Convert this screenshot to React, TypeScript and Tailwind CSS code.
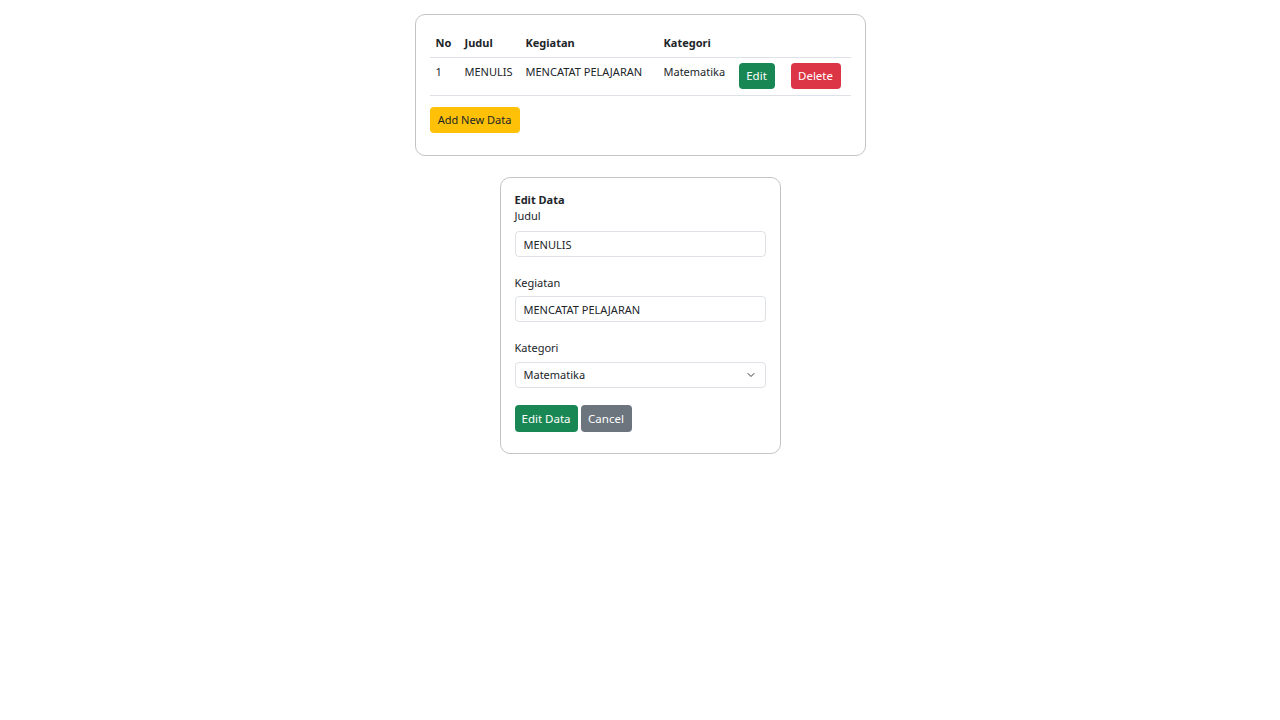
import React, { useState } from 'react';

const rows = [{ no: 1, judul: 'MENULIS', kegiatan: 'MENCATAT PELAJARAN', kategori: 'Matematika' }];

export default function App() {
  const [judul, setJudul] = useState('MENULIS');
  const [kegiatan, setKegiatan] = useState('MENCATAT PELAJARAN');
  const [kategori, setKategori] = useState('Matematika');

  return (
    <div className="min-h-screen bg-white flex flex-col items-center pt-[14px] text-[11px] leading-[18px] text-[#212529]" style={{ fontFamily: '"Noto Sans", "Open Sans", sans-serif' }}>
      {/* Table card */}
      <div className="w-[451px] border border-[#c4c4c4] rounded-[10px] px-[14px] pt-[14px] pb-[22px]">
        <table className="w-[421px] table-fixed border-collapse">
          <colgroup>
            <col className="w-[29px]" />
            <col className="w-[61px]" />
            <col className="w-[138px]" />
            <col className="w-[75px]" />
            <col className="w-[52px]" />
            <col className="w-[66px]" />
          </colgroup>
          <thead>
            <tr className="border-b border-[#dee2e6]">
              <th className="text-left font-bold px-[6px] py-[5px]">No</th>
              <th className="text-left font-bold px-[6px] py-[5px]">Judul</th>
              <th className="text-left font-bold px-[6px] py-[5px]">Kegiatan</th>
              <th className="text-left font-bold px-[6px] py-[5px]">Kategori</th>
              <th className="px-[6px] py-[5px]"></th>
              <th className="px-[6px] py-[5px]"></th>
            </tr>
          </thead>
          <tbody>
            {rows.map((r) => (
              <tr key={r.no} className="border-b border-[#dee2e6] align-top">
                <td className="px-[6px] pt-[5px] pb-[6px]">{r.no}</td>
                <td className="px-[6px] pt-[5px] pb-[6px] whitespace-nowrap">{r.judul}</td>
                <td className="px-[6px] pt-[5px] pb-[6px] whitespace-nowrap">{r.kegiatan}</td>
                <td className="px-[6px] pt-[5px] pb-[6px] whitespace-nowrap">{r.kategori}</td>
                <td className="px-[6px] pt-[5px] pb-[6px]">
                  <button className="h-[26px] w-[36px] rounded-[4px] bg-[#198754] text-white text-[11.5px]">Edit</button>
                </td>
                <td className="px-[6px] pt-[5px] pb-[6px]">
                  <button className="h-[26px] w-[50px] rounded-[4px] bg-[#dc3545] text-white text-[11.5px]">Delete</button>
                </td>
              </tr>
            ))}
          </tbody>
        </table>
        <button className="mt-[11px] h-[26px] w-[90px] rounded-[4px] bg-[#ffc107] text-[#212529]">Add New Data</button>
      </div>

      {/* Edit form card */}
      <div className="mt-[21px] w-[281px] border border-[#c4c4c4] rounded-[10px] px-[14px] pt-[14px] pb-[21px]">
        <div className="font-bold leading-[16px]">Edit Data</div>
        <div className="leading-[16px]">Judul</div>
        <input
          value={judul}
          onChange={(e) => setJudul(e.target.value)}
          className="mt-[7px] block w-full h-[26px] px-[8px] border border-[#dee2e6] rounded-[4px] outline-none"
        />
        <div className="mt-[17px]">Kegiatan</div>
        <input
          value={kegiatan}
          onChange={(e) => setKegiatan(e.target.value)}
          className="mt-[4px] block w-full h-[26px] px-[8px] border border-[#dee2e6] rounded-[4px] outline-none"
        />
        <div className="mt-[17px]">Kategori</div>
        <div className="relative mt-[5px]">
          <select
            value={kategori}
            onChange={(e) => setKategori(e.target.value)}
            className="appearance-none block w-full h-[26px] px-[8px] border border-[#dee2e6] rounded-[4px] outline-none bg-white"
          >
            <option>Matematika</option>
            <option>Bahasa</option>
            <option>IPA</option>
          </select>
          <svg className="absolute right-[10px] top-[9px] pointer-events-none" width="10" height="8" viewBox="0 0 16 16">
            <path d="M2 5l6 6 6-6" fill="none" stroke="#343a40" strokeWidth="2" strokeLinecap="round" strokeLinejoin="round" />
          </svg>
        </div>
        <div className="mt-[17px] flex gap-[3px]">
          <button className="h-[27px] w-[63px] rounded-[4px] bg-[#198754] text-white text-[11.5px]">Edit Data</button>
          <button className="h-[27px] w-[51px] rounded-[4px] bg-[#6c757d] text-white text-[11.5px]">Cancel</button>
        </div>
      </div>
    </div>
  );
}
